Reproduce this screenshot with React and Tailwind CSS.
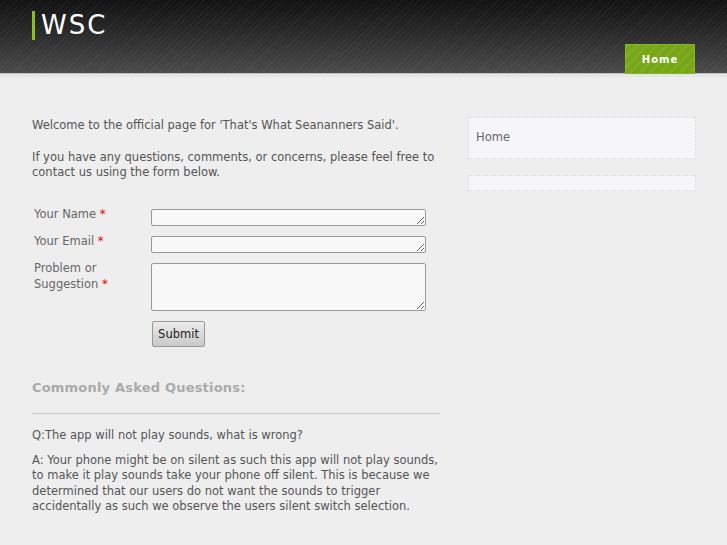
import React from 'react';

const Label = ({ children }) => (
  <label className="block -mt-[3px] text-[11.5px] leading-[16px] text-[#666]">
    {children} <span className="text-[#e00]">*</span>
  </label>
);

const App = () => {
  return (
    <div className="min-h-[545px] bg-[#eeeeee] font-['DejaVu_Sans',sans-serif]">
      {/* Header */}
      <header className="h-[73px] bg-gradient-to-b from-[#121212] to-[#4b4b4b] relative">
        <div className="absolute inset-0 bg-[repeating-linear-gradient(135deg,rgba(255,255,255,0.04)_0px,rgba(255,255,255,0.04)_1px,transparent_1px,transparent_4px)]" />
        <div className="relative flex justify-between h-full px-[32px]">
          <div className="flex items-start pt-[11px]">
            <div className="w-[3px] h-[29px] bg-[#8bbf1e]" />
            <span className="ml-[6px] text-white text-[26px] leading-[28px] tracking-[2px] font-['DejaVu_Sans',sans-serif]">WSC</span>
          </div>
          <div className="flex items-end">
            <a className="w-[70px] h-[30px] mb-[-1px] bg-[#76a616] bg-[repeating-linear-gradient(135deg,rgba(255,255,255,0.06)_0px,rgba(255,255,255,0.06)_3px,transparent_3px,transparent_7px)] flex items-center justify-center text-white text-[10px] font-bold tracking-[1px] border border-[#86b526]">
              Home
            </a>
          </div>
        </div>
      </header>
      <div className="h-[1px] bg-[#c4c4c4]" />
      <div className="h-[3px] bg-[#e6e6e6]" />

      {/* Body */}
      <div className="flex pl-[32px] pr-[31px] pt-[41px] gap-[28px]">
        <main className="w-[408px] text-[11.5px] leading-[15px] text-[#555]">
          <p>Welcome to the official page for 'That's What Seananners Said'.</p>
          <p className="mt-[17px]">
            If you have any questions, comments, or concerns, please feel free to contact us using the form below.
          </p>

          <form className="mt-[29px] pl-[2px]">
            <div className="grid grid-cols-[117px_275px] gap-y-[10px]">
              <div><Label>Your Name</Label></div>
              <textarea className="h-[17px] bg-[#f8f8f9] border border-[#999] rounded-[2px]" rows={1} />
              <div><Label>Your Email</Label></div>
              <textarea className="h-[17px] bg-[#f8f8f9] border border-[#999] rounded-[2px]" rows={1} />
              <div className="-mt-[3px] text-[11.5px] leading-[16px] text-[#666]">
                Problem or<br />Suggestion <span className="text-[#e00]">*</span>
              </div>
              <textarea className="h-[48px] bg-[#f8f8f9] border border-[#999] rounded-[2px]" />
              <div />
              <div>
                <button type="button" className="h-[26px] w-[53px] ml-[1px] border border-[#999] rounded-[2px] bg-gradient-to-b from-[#ececec] to-[#c9c9c9] text-[11.5px] text-[#222]">
                  Submit
                </button>
              </div>
            </div>
          </form>

          <h2 className="mt-[32px] text-[13px] leading-[18px] font-bold text-[#aaa] tracking-[0.2px]">Commonly Asked Questions:</h2>
          <div className="mt-[16px] h-[1px] bg-[#c8c8c8]" />
          <p className="mt-[14px]">Q:The app will not play sounds, what is wrong?</p>
          <p className="mt-[10px] leading-[15.3px]">
            A: Your phone might be on silent as such this app will not play sounds, to make it play sounds take your phone off silent. This is because we determined that our users do not want the sounds to trigger accidentally as such we observe the users silent switch selection.
          </p>
        </main>

        <aside className="w-[228px] -mt-[1px]">
          <div className="h-[42px] bg-[#f6f6f8] border border-dotted border-[#d8d8dc] flex items-center px-[7px] text-[11.5px] text-[#666]">
            Home
          </div>
          <div className="mt-[16px] h-[16px] bg-[#f6f6f8] border border-dotted border-[#d8d8dc]" />
        </aside>
      </div>
    </div>
  );
};

export default App;
